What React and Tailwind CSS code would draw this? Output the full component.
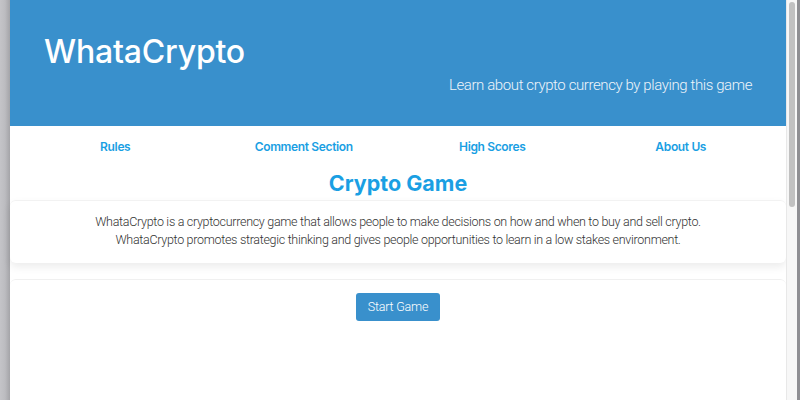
import React from "react";

const NAV = ["Rules", "Comment Section", "High Scores", "About Us"];

function Header() {
  return (
    <header className="h-[126px] bg-[#3990cc] px-[34px] pt-[32px] text-white">
      <h1 className="text-[32px] font-medium leading-[40px] tracking-[-0.2px]">WhataCrypto</h1>
      <p className="mt-[2px] text-right font-['Roboto',sans-serif] text-[15px] font-light leading-[22px] tracking-[-0.4px] text-[#eef4fa]">
        Learn about crypto currency by playing this game
      </p>
    </header>
  );
}

function Nav() {
  return (
    <nav className="grid grid-cols-4 px-[11px] pt-[12px]">
      {NAV.map((item) => (
        <a
          key={item}
          href="#"
          className="text-center text-[12px] font-semibold leading-[18px] tracking-[-0.35px] text-[#1a9fe3]"
        >
          {item}
        </a>
      ))}
    </nav>
  );
}

export default function App() {
  return (
    <div
      className="flex h-[400px] w-[800px] overflow-hidden bg-white"
      style={{ fontFamily: "Inter, 'Noto Sans', sans-serif" }}
    >
      <div className="w-[10px] shrink-0 bg-gradient-to-r from-[#c4c4c8] via-[#bcbcc0] to-[#a4a4a8]" />

      <main className="flex min-w-0 flex-1 flex-col">
        <Header />
        <Nav />
        <h2 className="mt-[13px] text-center text-[21.5px] font-bold leading-[28px] text-[#1a9fe3]">
          Crypto Game
        </h2>
        <section className="mt-[3px] rounded-[6px] border-t border-[#f2f2f2] bg-white px-4 pb-[14px] pt-[12px] shadow-[0_4px_8px_rgba(0,0,0,0.08)]">
          <p className="text-center font-['Roboto',sans-serif] text-[12.5px] font-light leading-[18px] tracking-[-0.3px] text-[#333]">
            WhataCrypto is a cryptocurrency game that allows people to make decisions on how and when to buy and sell crypto.
            <br />
            WhataCrypto promotes strategic thinking and gives people opportunities to learn in a low stakes environment.
          </p>
        </section>
        <section className="mt-[16px] flex flex-1 justify-center rounded-t-[6px] border-t border-[#f0f0f0] bg-white pt-[13px]">
          <button
            type="button"
            className="h-[28px] rounded-[3px] bg-[#3990cc] px-[12px] font-['Roboto',sans-serif] text-[12.5px] font-light tracking-[-0.2px] text-white"
          >
            Start Game
          </button>
        </section>
      </main>

      <div className="relative w-[11px] shrink-0 border-l border-[#e8e8e8] bg-[#f7f7f7]">
        <div className="absolute left-[2px] top-[2px] h-[205px] w-[6px] rounded-full bg-[#c1c1c1]" />
      </div>
      <div className="w-[3px] shrink-0 bg-[#8f8f93]" />
    </div>
  );
}
